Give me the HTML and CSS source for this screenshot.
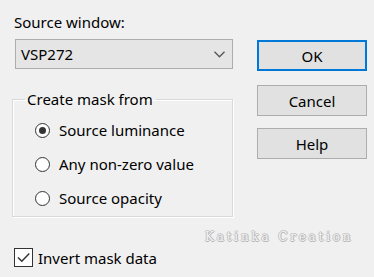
FILE: index.html
```html
<!DOCTYPE html>
<html lang="en">
<head>
    <meta charset="UTF-8">
    <title>Create Mask</title>
    <link rel="stylesheet" href="styles.css">
</head>
<body>

    <div class="dialog">
        <div class="left">
            <div class="field-label">Source window:</div>
            <div class="select">
                <span>VSP272</span>
                <svg class="chevron" width="11" height="7" viewBox="0 0 11 7">
                    <path d="M0.5 0.8 L5.5 5.8 L10.5 0.8" fill="none" stroke="#555" stroke-width="1.3"/>
                </svg>
            </div>

            <fieldset class="group">
                <legend>Create mask from</legend>
                <div class="radio checked"><span class="dot"></span>Source luminance</div>
                <div class="radio"><span class="dot"></span>Any non-zero value</div>
                <div class="radio"><span class="dot"></span>Source opacity</div>
            </fieldset>

            <div class="check">
                <span class="box">
                    <svg width="17" height="17" viewBox="0 0 17 17">
                        <path d="M3 8.5 L6.8 12.3 L14.3 4.5" fill="none" stroke="#333" stroke-width="1.5"/>
                    </svg>
                </span>
                Invert mask data
            </div>
        </div>

        <div class="right">
            <button class="btn default">OK</button>
            <button class="btn">Cancel</button>
            <button class="btn">Help</button>
        </div>

        <div class="watermark">Katinka Creation</div>
    </div>

</body>
</html>
```

FILE: styles.css
```css
body {
    margin: 0;
    background-color: #f0f0f0;
    font-family: 'Noto Sans', 'Open Sans', sans-serif;
    font-size: 15px;
    color: #000;
}

.dialog {
    position: relative;
    display: flex;
    width: 374px;
    height: 277px;
    padding: 12px 0 0 12px;
    box-sizing: border-box;
}

.left {
    width: 221px;
}

.field-label {
    margin-left: 2px;
    height: 27px;
    line-height: 20px;
}

.select {
    display: flex;
    align-items: center;
    justify-content: space-between;
    margin-left: 3px;
    width: 218px;
    height: 30px;
    padding: 0 7px 0 5px;
    box-sizing: border-box;
    background-color: #e5e5e5;
    border: 1px solid #adadad;
}

.chevron {
    margin-top: 1px;
}

.group {
    margin: 20px 0 0 0;
    padding: 4px 0 0 23px;
    height: 128px;
    box-sizing: border-box;
    border: 1px solid #d9d9d9;
    box-shadow: 1px 1px 0 #fff, inset 1px 1px 0 #fff;
}

legend {
    padding: 0 3px 0 2px;
    margin-left: -11px;
    line-height: 20px;
}

.radio {
    display: flex;
    align-items: center;
    height: 34px;
}

.dot {
    width: 13px;
    height: 13px;
    margin-left: -1px;
    margin-right: 9px;
    border: 1px solid #333;
    border-radius: 50%;
    background-color: #fff;
    box-sizing: content-box;
    position: relative;
}

.radio.checked .dot::after {
    content: "";
    position: absolute;
    left: 3px;
    top: 3px;
    width: 7px;
    height: 7px;
    border-radius: 50%;
    background-color: #333;
}

.check {
    display: flex;
    align-items: center;
    margin: 31px 0 0 2px;
    height: 19px;
}

.box {
    width: 17px;
    height: 17px;
    margin-right: 5px;
    border: 1px solid #333;
    background-color: #fff;
}

.box svg {
    display: block;
}

.right {
    display: flex;
    flex-direction: column;
    margin: 28px 0 0 24px;
}

.btn {
    width: 110px;
    height: 31px;
    margin-bottom: 14px;
    padding: 0;
    font-family: inherit;
    font-size: 15px;
    color: #000;
    background-color: #e1e1e1;
    border: 1px solid #adadad;
}

.btn + .btn + .btn {
    margin-top: -2px;
}

.btn.default {
    border: 2px solid #0078d7;
}

.watermark {
    position: absolute;
    left: 205px;
    top: 230px;
    font-family: 'DejaVu Serif', serif;
    font-size: 12px;
    letter-spacing: 2.8px;
    color: #f2f2f2;
    text-shadow: 1px 0 0 #b4b4b4, -1px 0 0 #c4c4c4, 0 1px 0 #b4b4b4, 0 -1px 0 #c8c8c8;
}
```
